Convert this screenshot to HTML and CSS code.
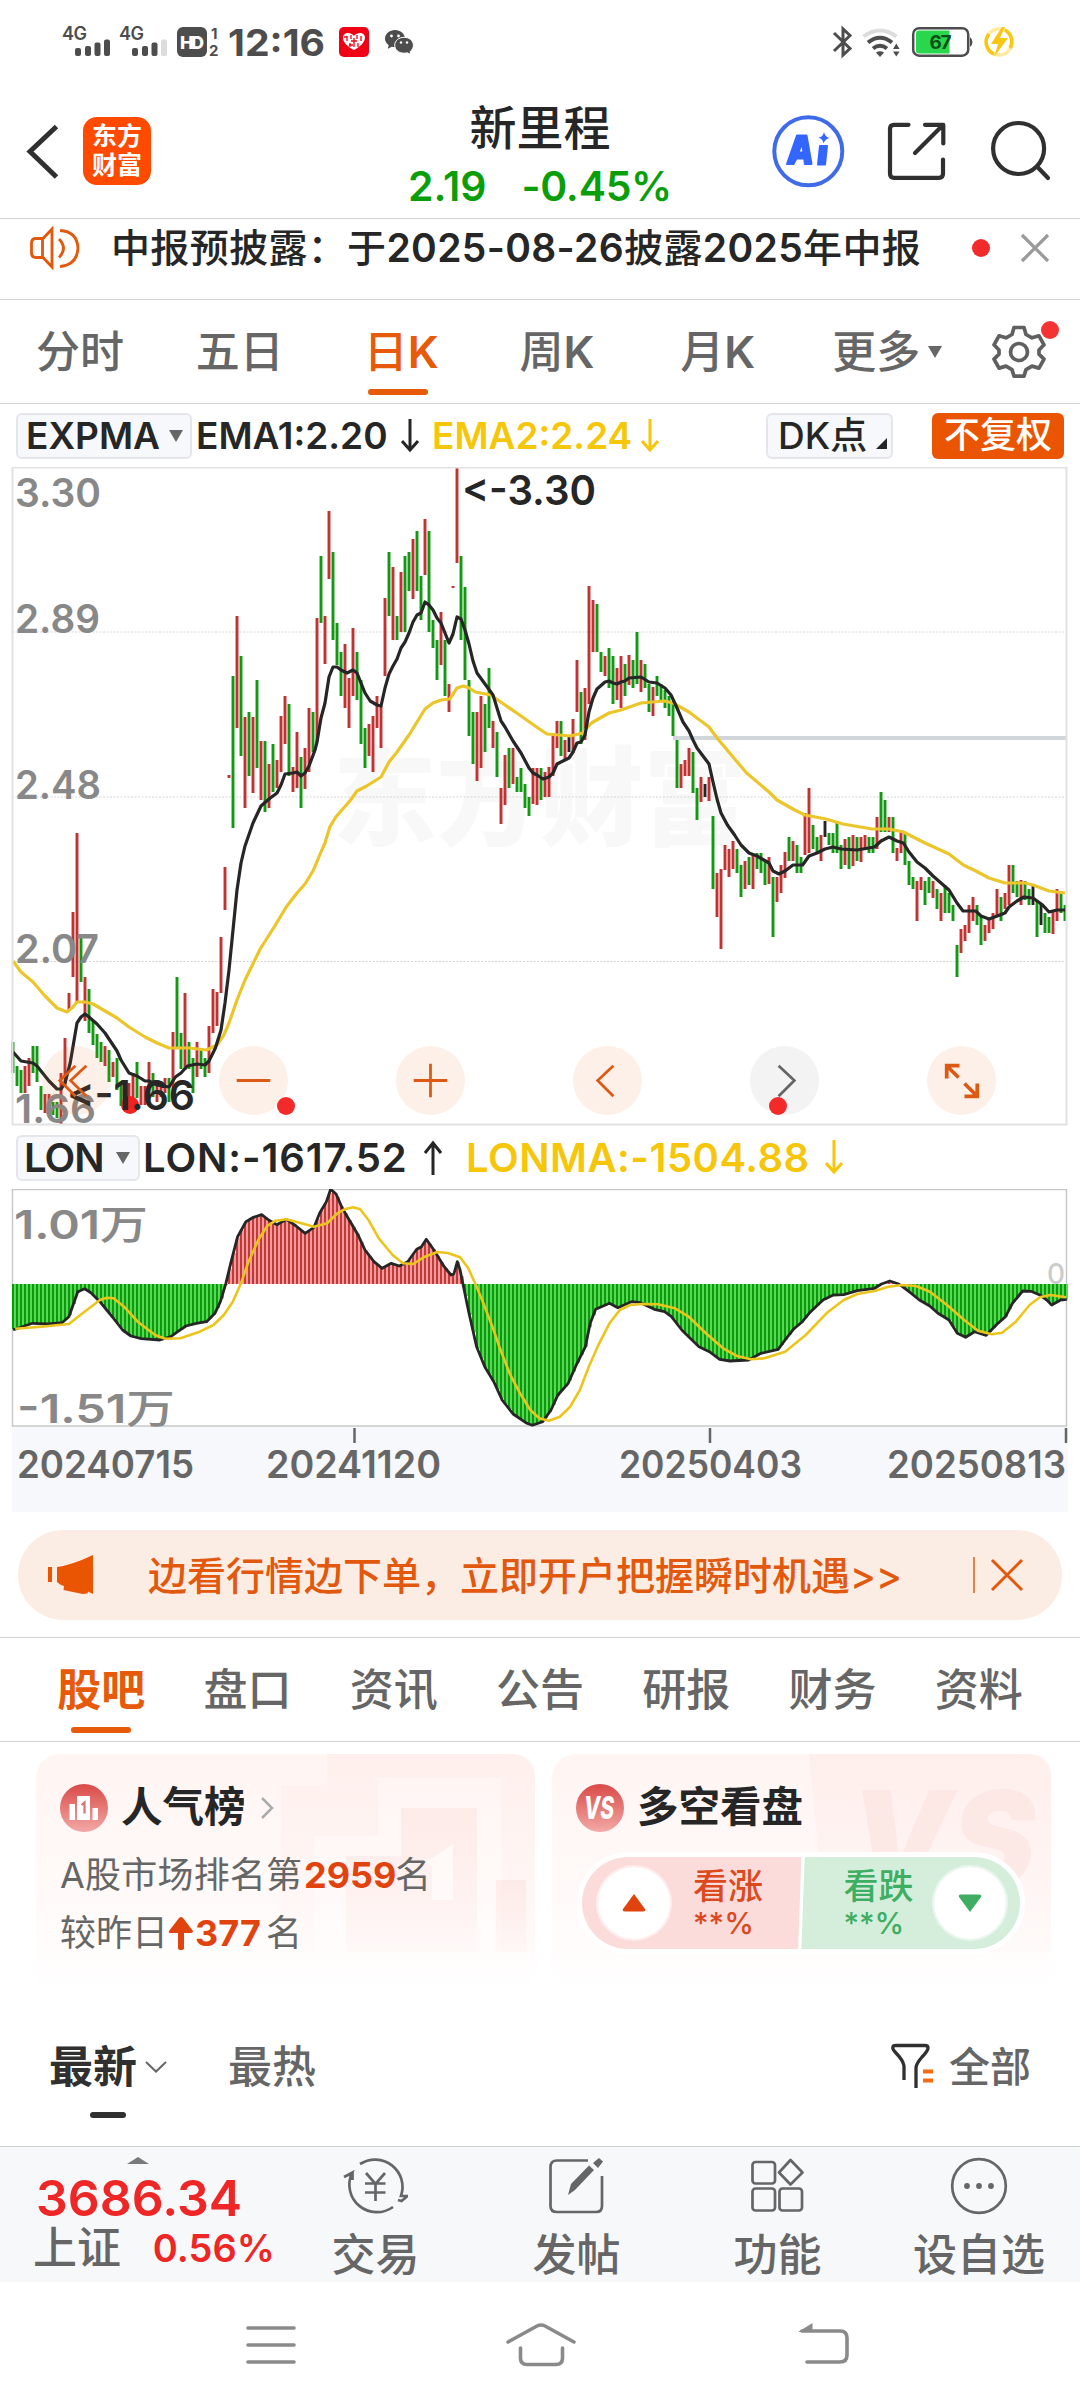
FILE: index.html
```html
<!DOCTYPE html>
<html lang="zh-CN">
<head>
<meta charset="utf-8">
<title>新里程</title>
<link rel="stylesheet" href="styles.css">
</head>
<body>
<div class="status">
  <svg class="status-left" viewBox="60 20 360 44" width="360" height="44">
    <g fill="#4d4d4d">
      <text x="62" y="39.500" class="st-4g" textLength="25">4G</text>
      <text x="119" y="39.500" class="st-4g" textLength="25">4G</text>
      <rect x="75" y="48" width="6" height="8" rx="2"/><rect x="85" y="46" width="6" height="10" rx="2"/><rect x="94.500" y="42.500" width="6" height="13.500" rx="2"/><rect x="104" y="39.500" width="6" height="16.500" rx="2"/>
      <rect x="132" y="48" width="6" height="8" rx="2"/><rect x="142" y="46" width="6" height="10" rx="2"/><rect x="151.500" y="42.500" width="6" height="13.500" rx="2"/>
      <rect x="161" y="39.500" width="6" height="16.500" rx="2" fill="#dcdcdc"/>
      <rect x="177" y="27" width="30" height="30" rx="6"/>
      <text x="180" y="49" class="st-hd" textLength="24">HD</text>
      <text x="211" y="39" class="st-sim">1</text>
      <text x="209" y="56" class="st-sim">2</text>
      <text x="228" y="56" class="st-time" textLength="97" lengthAdjust="spacingAndGlyphs">12:16</text>
    </g>
    <rect x="339" y="27" width="30" height="30" rx="5" fill="#f00014"/>
    <path d="M354 50 C340 43 341 33 348 33 C352 33 354 36 354 36 C354 36 356 33 360 33 C367 33 368 43 354 50Z" fill="#fff"/>
    <path d="M344 37h3v4M347 36v5m4-6v4m6-4v4m4-3v5M354 38v9m-4-4v4m8-4v4M351 41h6M349 45h4" stroke="#f00014" stroke-width="1.300" fill="none"/>
    <g fill="#4d4d4d">
      <path d="M395 30c-5.500 0-10 3.800-10 8.600 0 2.700 1.400 5 3.700 6.600l-.9 3.600 4-2c1 .3 2 .4 3.200.4 5.500 0 10-3.800 10-8.600S400.500 30 395 30z"/>
      <path d="M404 37.300c-5.300 0-9.300 3.500-9.300 7.900s4 8 9.300 8c1.200 0 2.200-.1 3.200-.4l3.700 1.800-.8-3c2-1.500 3.300-3.800 3.300-6.400 0-4.400-4.100-7.900-9.400-7.900z" stroke="#fff" stroke-width="1"/>
    </g>
    <g fill="#fff"><circle cx="391.500" cy="36" r="1.400"/><circle cx="398.500" cy="36" r="1.400"/><circle cx="401" cy="42.500" r="1.200"/><circle cx="407" cy="42.500" r="1.200"/></g>
  </svg>
  <svg class="status-right" viewBox="830 20 190 44" width="190" height="44">
    <path d="M834 33L850 48.500L843 55V29L850 35.500L834 51" fill="none" stroke="#4d4d4d" stroke-width="3"/>
    <g fill="none">
      <path d="M863.500 36.500Q880 24.500 896.500 36.500" stroke="#dcdcdc" stroke-width="4"/>
      <path d="M868 42.500Q880 33 892 42.500" stroke="#4d4d4d" stroke-width="4"/>
      <path d="M873 48.500Q880 43 887 48.500" stroke="#4d4d4d" stroke-width="4"/>
    </g>
    <path d="M876 52.500Q880 50 884 52.500L880 57Z" fill="#4d4d4d"/>
    <path d="M893 49l3.300-5.500 3.300 5.500zM893 51.500l3.300 5 3.300-5z" fill="#4d4d4d"/>
    <rect x="913.200" y="28.200" width="55" height="27.500" rx="6" fill="#fff" stroke="#4d4d4d" stroke-width="2.500"/>
    <path d="M919 30.500h30.500v23H919q-3 0-3-3v-17q0-3 3-3z" fill="#28d74b"/>
    <path d="M970 37q2.500 2 2.500 5t-2.500 5z" fill="#4d4d4d"/>
    <text x="929.500" y="48.500" class="st-bat" textLength="22">67</text>
    <circle cx="999" cy="42" r="13" fill="none" stroke="#ffeaa0" stroke-width="3.500"/>
    <path d="M1005 30a13 13 0 0 1 5 18M994 54a13 13 0 0 1-5-20" fill="none" stroke="#f9c613" stroke-width="3.500"/>
    <path d="M1002 27L991 44h7l-4 13 14-19h-8l5-11z" fill="#f9c613"/>
  </svg>
</div>

<header class="top">
  <div class="top-left">
    <svg viewBox="26 120 34 62" width="34" height="62"><path d="M56.500 126.500L30 151.500L56.500 177" fill="none" stroke="#303030" stroke-width="5"/></svg>
    <div class="logo"><span>东方</span><span>财富</span></div>
  </div>
  <div class="top-mid">
    <h1>新里程</h1>
    <div class="quote"><span class="q1">2.19</span><span class="q2">-0.45%</span></div>
  </div>
  <svg class="top-right" viewBox="770 113 284 76" width="284" height="76">
    <circle cx="808.300" cy="151.300" r="34" fill="#fff" stroke="#3f6bea" stroke-width="4"/>
    <g fill="#3366ff" stroke="#3366ff" stroke-width="2" stroke-linejoin="round">
      <path fill-rule="evenodd" d="M797 135.500h9.500l5 28.500h-6.500l-.8-5.500h-7.700l-3 5.500h-6.500zM802 143l-3.500 9.500h5z"/>
      <path d="M820 146h7l-2 18.500h-7z"/>
    </g>
    <path d="M824 132Q825 137 829.500 138Q825 139 823.500 143.500Q823 139 818.500 137.500Q823 137 824 132Z" fill="#3366ff"/>
    <g fill="none" stroke="#303030" stroke-width="4.200" stroke-linecap="round" stroke-linejoin="round">
      <path d="M908.500 124.800H894q-4 0-4 4v45q0 4 4 4H939q4 0 4-4V159.500M925 124.800h18.300V143.500M941 127L915 153"/>
      <circle cx="1018.600" cy="148.500" r="25.500"/>
      <path d="M1037 166.500l11 11.500"/>
    </g>
  </svg>
</header>

<div class="notice">
  <svg viewBox="28 222 56 48" width="56" height="48"><g fill="none" stroke="#e2580c" stroke-width="2.800"><path d="M36 236.500h7l9-9.500v38l-9-9.500h-7q-4.500 0-4.500-4.500V241q0-4.500 4.500-4.500zM42.500 237v18M59 237q9 9.500 0 18.500M60 228.500Q77 229.500 78 246Q77 263 60 264.500"/></g></svg>
  <span class="notice-text">中报预披露：于<span class="n">2025-08-26</span>披露<span class="n">2025</span>年中报</span>
  <i class="dot"></i>
  <svg class="notice-x" viewBox="0 0 30 30" width="30" height="30"><path d="M2 2L28 28M28 2L2 28" stroke="#9a9a9a" stroke-width="3.200"/></svg>
</div>

<nav class="periods">
  <span>分时</span><span>五日</span><span class="on">日<span class="n">K</span></span><span>周<span class="n">K</span></span><span>月<span class="n">K</span></span>
  <span class="more">更多<svg viewBox="0 0 14 12" width="14" height="12"><path d="M0 0h14L7 12z" fill="#666"/></svg></span>
  <div class="gear">
    <svg viewBox="992 324 54 56" width="54" height="56"><g fill="none" stroke="#606060" stroke-width="3.700" stroke-linejoin="round"><path d="M1014 327.500h10l2 7 6 3.300 7-2 5 9-5 5.300v4l5 5-5 9-7-2-6 3.500-2 6.500h-10l-2-6.500-6-3.500-7 2-5-9 5-5v-4l-5-5.300 5-9 7 2 6-3.300z"/><circle cx="1019" cy="352" r="8.500"/></g></svg>
    <i class="dot"></i>
  </div>
</nav>

<div class="ind">
  <span class="box expma"><span class="t">EXPMA</span><svg viewBox="0 0 14 12" width="14" height="12"><path d="M0 0h14L7 12z" fill="#666"/></svg></span>
  <span class="ema1">EMA1:2.20</span>
  <svg class="arr1" viewBox="0 0 18 34" width="18" height="34"><path d="M9 0V31M1 22L9 31L17 22" fill="none" stroke="#262626" stroke-width="3"/></svg>
  <span class="ema2">EMA2:2.24</span>
  <svg class="arr2" viewBox="0 0 18 34" width="18" height="34"><path d="M9 0V31M1 22L9 31L17 22" fill="none" stroke="#f6c60b" stroke-width="3"/></svg>
  <span class="box dk">DK点<svg viewBox="0 0 11 11" width="11" height="11"><path d="M11 0V11H0z" fill="#262626"/></svg></span>
  <span class="fq">不复权</span>
</div>

<section class="kchart">
  <svg id="kline" viewBox="0 467 1080 659" width="1080" height="659">
    <text x="333" y="837" class="wm" textLength="414" lengthAdjust="spacingAndGlyphs">东方财富</text>
    <path d="M12 632H1067M12 797H1067M12 961.500H1067" stroke="#d6d6d6" stroke-width="1" stroke-dasharray="2 1.500"/>
    <path d="M673 738H1067" stroke="#d1d6da" stroke-width="4"/>
    <g id="candles" fill="none" stroke-width="2.900"></g>
    <circle cx="130" cy="1105" r="9" fill="#f22222"/>
    <g fill="none" stroke-width="3.200" stroke-linejoin="round">
      <polyline id="ema2" stroke="#ecc52a"/>
      <polyline id="ema1" stroke="#262626"/>
    </g>
    <rect x="12.500" y="467.500" width="1054" height="657" fill="none" stroke="#e2e2e2" stroke-width="2"/>
    <g class="axis">
      <text x="15" y="507" textLength="86" lengthAdjust="spacingAndGlyphs">3.30</text>
      <text x="15" y="633" textLength="85" lengthAdjust="spacingAndGlyphs">2.89</text>
      <text x="15" y="799" textLength="86" lengthAdjust="spacingAndGlyphs">2.48</text>
      <text x="15" y="963" textLength="84" lengthAdjust="spacingAndGlyphs">2.07</text>
      <text x="15" y="1123" textLength="81" lengthAdjust="spacingAndGlyphs">1.66</text>
    </g>
    <g class="mark">
      <text x="462" y="505" textLength="134" lengthAdjust="spacingAndGlyphs">&lt;-3.30</text>
      <text x="67" y="1110" textLength="128" lengthAdjust="spacingAndGlyphs">&lt;-1.66</text>
    </g>
  </svg>
  <div class="controls">
    <b><svg viewBox="0 0 70 70"><path d="M34 20L18 35L34 51M45 20L29 35L45 51"/></svg></b>
    <b><svg viewBox="0 0 70 70"><path d="M18 35H52"/></svg><i class="dot d2"></i></b>
    <b><svg viewBox="0 0 70 70"><path d="M18 35H52M35 18V52"/></svg></b>
    <b><svg viewBox="0 0 70 70"><path d="M41 20L25 35L41 51"/></svg></b>
    <b class="off"><svg viewBox="0 0 70 70"><path d="M29 20L45 35L29 51"/></svg><i class="dot d5"></i></b>
    <b><svg viewBox="0 0 70 70"><path class="heavy" d="M33 20H20V33M20 20L32 32M38 51H51V38M51 51L38 38"/></svg></b>
  </div>
</section>

<div class="ind lon">
  <span class="box lonbox"><span class="t">LON</span><svg viewBox="0 0 14 12" width="14" height="12"><path d="M0 0h14L7 12z" fill="#666"/></svg></span>
  <span class="lon1">LON:-1617.52</span>
  <svg class="arr3" viewBox="0 0 18 35" width="18" height="35"><path d="M9 35V3M1 13L9 3L17 13" fill="none" stroke="#262626" stroke-width="3"/></svg>
  <span class="lon2">LONMA:-1504.88</span>
  <svg class="arr4" viewBox="0 0 18 35" width="18" height="35"><path d="M9 0V32M1 23L9 32L17 23" fill="none" stroke="#f6c60b" stroke-width="3"/></svg>
</div>

<section class="lchart">
  <svg viewBox="0 1189 1080 323" width="1080" height="323">
    <rect x="12" y="1427" width="1056" height="85" fill="#f7f8fb"/>
    <rect x="12.500" y="1189.500" width="1054" height="236.500" fill="#fff" stroke="#c8c8c8" stroke-width="1.500"/>
    <text x="1047" y="1284" class="zero">0</text>
    <g id="hist"></g>
    <polyline id="lon" fill="none" stroke="#262626" stroke-width="2.800" stroke-linejoin="round"/>
    <polyline id="lonma" fill="none" stroke="#ecc51c" stroke-width="2.600" stroke-linejoin="round"/>
    <g class="axis">
      <text x="14" y="1239" textLength="134" lengthAdjust="spacingAndGlyphs"><tspan class="n">1.01</tspan><tspan class="wan">万</tspan></text>
      <text x="17" y="1423" textLength="158" lengthAdjust="spacingAndGlyphs"><tspan class="n">-1.51</tspan><tspan class="wan">万</tspan></text>
    </g>
    <path d="M354.500 1428V1443M710 1428V1443M1066 1428V1443" stroke="#666" stroke-width="2.500"/>
    <g class="dates">
      <text x="17" y="1478" textLength="177" lengthAdjust="spacingAndGlyphs">20240715</text>
      <text x="266" y="1478" textLength="175" lengthAdjust="spacingAndGlyphs">20241120</text>
      <text x="619" y="1478" textLength="183" lengthAdjust="spacingAndGlyphs">20250403</text>
      <text x="887" y="1478" textLength="179" lengthAdjust="spacingAndGlyphs">20250813</text>
    </g>
  </svg>
</section>

<div class="banner">
  <svg viewBox="46 1553 50 44" width="50" height="44"><path d="M48 1567h4v15h-4zM57 1567q15-2 36-12v39q-2-1-5-2.500l-.5 2-5 .5-19-4 .5-4q-4-1-7-4z" fill="#ea5504"/></svg>
  <span class="banner-text">边看行情边下单，立即开户把握瞬时机遇&gt;&gt;</span>
  <span class="sep"></span>
  <svg class="bx" viewBox="0 0 34 34" width="34" height="34"><path d="M2 2L32 32M32 2L2 32" stroke="#e2580c" stroke-width="3"/></svg>
</div>

<nav class="tabs"><span class="on">股吧</span><span>盘口</span><span>资讯</span><span>公告</span><span>研报</span><span>财务</span><span>资料</span></nav>

<section class="cards">
  <article class="card">
    <svg class="deco" viewBox="0 0 499 242" width="499" height="242">
      <defs><linearGradient id="fade" x1="0" y1="0" x2="0" y2="1"><stop offset="0" stop-color="#fbdcd8" stop-opacity=".45"/><stop offset="1" stop-color="#fbdcd8" stop-opacity=".12"/></linearGradient></defs>
      <path fill="url(#fade)" d="M245 32H291V0H477Q499 0 499 22V198H465V24H342V82H278V198H245z" opacity=".5"/>
      <path fill="url(#fade)" fill-rule="evenodd" d="M365 54H441V198H310V102H365zM390 108L417 90V146H396V112z"/>
      <path fill="url(#fade)" d="M460 126H490V198H460z"/>
    </svg>
    <div class="card-head">
      <svg viewBox="0 0 48 48" width="48" height="48"><defs><linearGradient id="rg" x1="0" y1="0" x2="0" y2="1"><stop offset="0" stop-color="#d94a48"/><stop offset="1" stop-color="#f2a9a6"/></linearGradient></defs><circle cx="24" cy="24" r="24" fill="url(#rg)"/><path d="M9.500 20h5.500v16H9.500zM17 12H30V36H17zM32.500 24H38V36h-5.500z" fill="#fff"/><path d="M21.500 21l3-2.500v11" fill="none" stroke="#dd6f6c" stroke-width="2.200"/></svg>
      <h2>人气榜</h2>
      <svg class="chev" viewBox="0 0 14 24" width="14" height="24"><path d="M2 2L12 12L2 22" fill="none" stroke="#aaa" stroke-width="2.500"/></svg>
    </div>
    <p class="row1"><span class="pre">A股市场排名第</span><em>2959</em>名</p>
    <p class="row2">较昨日<svg viewBox="0 0 26 33" width="26" height="33"><path d="M13 0Q14 0 15 1L25 14Q25 16 23 16H16V31Q16 33 13 33T10 31V16H3Q0 16 1 14L11 1Q12 0 13 0z" fill="#e1430f"/></svg><em>377</em><span class="ming">名</span></p>
  </article>
  <article class="card">
    <svg class="deco" viewBox="0 0 499 242" width="499" height="242"><path fill="url(#fade)" opacity=".6" d="M257 0H477Q499 0 499 22V198H275z"/><text x="298" y="132" class="vsbig" textLength="185" lengthAdjust="spacingAndGlyphs">VS</text></svg>
    <div class="card-head">
      <svg viewBox="0 0 48 48" width="48" height="48"><circle cx="24" cy="24" r="24" fill="url(#rg)"/><text x="8" y="35" class="vs" textLength="30" lengthAdjust="spacingAndGlyphs">VS</text></svg>
      <h2>多空看盘</h2>
    </div>
    <div class="pill">
      <div class="half up"><span class="knob"><svg viewBox="0 0 24 18" width="24" height="18"><path d="M12 0L23 15Q24 17.500 21 17.500H3Q0 17.500 1 15z" fill="#e1430f"/></svg></span><span class="vote"><b>看涨</b><b class="pc">**%</b></span></div>
      <div class="half down"><span class="vote"><b>看跌</b><b class="pc">**%</b></span><span class="knob"><svg viewBox="0 0 24 18" width="24" height="18"><path d="M12 18L23 3Q24 .5 21 .5H3Q0 .5 1 3z" fill="#3fae62"/></svg></span></div>
    </div>
  </article>
</section>

<div class="sort">
  <span class="newest">最新</span>
  <svg class="down-chev" viewBox="0 0 22 12" width="22" height="12"><path d="M1 1L11 10.500L21 1" fill="none" stroke="#666" stroke-width="2"/></svg>
  <span class="hot">最热</span>
  <svg class="filter" viewBox="890 2042 46 50" width="46" height="50"><path d="M904 2080V2066Q903 2060 896 2053Q892 2049 893 2047Q893 2045.500 896 2045.500H925Q928 2045.500 928 2048Q928 2051 922 2057Q916 2064 916 2068V2088" fill="none" stroke="#303030" stroke-width="3.300"/><path d="M923 2071.500h10M923 2080.500h10" stroke="#f56a12" stroke-width="4"/></svg>
  <span class="all">全部</span>
</div>

<footer class="bar">
  <div class="index">
    <svg viewBox="0 0 22 7" width="22" height="7"><path d="M0 7L11 0L22 7z" fill="#7a7a7a"/></svg>
    <div class="index-val">3686.34</div>
    <div class="index-row"><span class="nm">上证</span><span class="pct">0.56%</span></div>
  </div>
  <div class="act"><svg viewBox="342 2156 68 60" width="68" height="60"><g fill="none" stroke="#666" stroke-width="2.700"><path d="M360 2164A27.500 27.500 0 0 1 401 2196L408 2196M398 2200L401.500 2201L407 2196.500M393 2207A27.500 27.500 0 0 1 352 2173L344 2177M344 2177L352.500 2172.500V2180"/><path d="M366 2173l9.500 11 9.500-11M375.500 2184V2201M365 2183.500h20.500M365 2192.500h20.500"/></g></svg><span>交易</span></div>
  <div class="act"><svg viewBox="548 2156 60 60" width="60" height="60"><g fill="none" stroke="#666" stroke-width="2.700"><path d="M589 2160.500H558Q551.500 2160.500 551.500 2167V2206Q551.500 2212 558 2212H597Q603 2212 603 2206V2176"/></g><path d="M569 2195L572 2184L590 2165.500L595 2170L576 2190zM594 2163L600 2158L604 2161.500L599 2168z" fill="#666"/></svg><span>发帖</span></div>
  <div class="act"><svg viewBox="749 2156 60 60" width="60" height="60"><g fill="none" stroke="#666" stroke-width="2.700"><rect x="753.500" y="2162" width="22.500" height="21.500" rx="3"/><rect x="753.500" y="2188.500" width="22.500" height="22" rx="3"/><rect x="780.500" y="2188.500" width="22.500" height="22" rx="3"/><path d="M791.500 2160L803.500 2172.500L791.500 2184.500L780 2172.500Z" stroke-linejoin="round"/></g></svg><span>功能</span></div>
  <div class="act"><svg viewBox="949 2156 60 60" width="60" height="60"><circle cx="979" cy="2186" r="26.800" fill="none" stroke="#666" stroke-width="2.700"/><g fill="#666"><circle cx="967" cy="2186" r="2.900"/><circle cx="979" cy="2186" r="2.900"/><circle cx="991" cy="2186" r="2.900"/></g></svg><span>设自选</span></div>
</footer>

<nav class="sys">
  <svg viewBox="244 2320 54 50" width="54" height="50"><path d="M248 2328H294M248 2345H294M248 2362H294" stroke="#8a8a8a" stroke-width="3.600" stroke-linecap="round"/></svg>
  <svg class="home" viewBox="504 2320 74 50" width="74" height="50"><path d="M508 2342L537 2326Q541 2324 545 2326L574 2342M520.500 2348V2358Q520.500 2364.500 527 2364.500H556Q562.500 2364.500 562.500 2358V2348" fill="none" stroke="#8a8a8a" stroke-width="3.600" stroke-linecap="round" stroke-linejoin="round"/></svg>
  <svg viewBox="796 2320 56 50" width="56" height="50"><path d="M802 2331H840Q847 2331 847 2338V2355Q847 2362 840 2362H807" fill="none" stroke="#8a8a8a" stroke-width="3.600" stroke-linecap="round"/><path d="M798 2332L812.500 2323V2332z" fill="#8a8a8a"/></svg>
</nav>
<script src="charts.js"></script>
</body>
</html>
```
FILE: styles.css
```css
* { box-sizing: border-box; margin: 0; padding: 0; }
body {
  width: 1080px; height: 2408px; overflow: hidden; background: #fff; color: #262626;
  font-family: Inter, "Noto Sans CJK SC", sans-serif; font-weight: 500; line-height: 1; white-space: nowrap;
}
svg { display: block; flex: none; }
i, em { font-style: normal; }
.n { font-weight: 600; }
.dot { display: block; width: 18px; height: 18px; border-radius: 50%; background: #f22a2a; }

.status { height: 84px; padding: 20px 60px 0; display: flex; justify-content: space-between; }
.st-4g { font-size: 18px; font-weight: 600; }
.st-hd { font-size: 18px; font-weight: 800; fill: #fff; }
.st-sim { font-size: 15px; font-weight: 700; }
.st-time { font-size: 37px; font-weight: 700; }
.st-bat { font-size: 19px; font-weight: 700; fill: #0c4d18; }

.top { height: 135px; padding: 0 26px; display: grid; grid-template-columns: 284px 1fr 284px; border-bottom: 1px solid #d2d2d2; }
.top-left { display: flex; align-items: center; gap: 23px; }
.logo { width: 68px; height: 68px; border-radius: 14px; background: #ff4a00; color: #fff; display: flex; flex-direction: column; align-items: center; justify-content: center; gap: 4px; font-size: 25px; font-weight: 700; }
.logo span { height: 25px; line-height: 25px; }
.top-mid { display: flex; flex-direction: column; align-items: center; }
.top-mid h1 { font-size: 47px; font-weight: 500; line-height: 47px; margin-top: 20px; }
.quote { display: flex; width: 264px; margin-top: 15px; color: #0a9e0a; font-size: 41px; font-weight: 600; }
.q1 { width: 115px; }
.q2 { letter-spacing: -.3px; }
.top-right { align-self: start; margin-top: 29px; }

.notice { height: 81px; padding: 0 30px 23px 28px; display: flex; align-items: center; border-bottom: 1px solid #d2d2d2; }
.notice-text { width: 833px; margin-left: 27px; font-size: 39px; letter-spacing: .35px; }
.notice .dot { margin-left: 28px; }
.notice-x { margin-left: 30px; }

.periods { height: 104px; padding: 0 34px 0 36px; display: flex; align-items: center; color: #666; font-size: 44px; border-bottom: 1px solid #d2d2d2; }
.periods > span { position: relative; width: 160px; line-height: 106px; }
.periods > span:nth-child(2) { width: 168px; }
.periods > span:nth-child(3) { width: 156px; }
.periods > span:nth-child(4) { width: 161px; }
.periods > span:nth-child(5) { width: 152px; }
.periods .on { color: #e65a0a; }
.on::after { content: ""; position: absolute; left: 4px; bottom: 7px; width: 60px; height: 6px; border-radius: 3px; background: #e65a0a; }
.periods .on::after { bottom: 10px; }
.periods .more { display: flex; align-items: center; gap: 8px; }
.gear { position: relative; margin-left: auto; }
.gear .dot { position: absolute; left: 49px; top: -3px; background: #f53333; }

.ind { height: 63px; padding-left: 16px; display: flex; align-items: center; font-size: 37px; font-weight: 600; }
.box { height: 46px; border: 2px solid #e4e6ec; border-radius: 6px; background: #f7f8fb; display: flex; align-items: center; }
.expma { width: 176px; padding-left: 8px; }
.expma .t { width: 143px; }
.ema1 { width: 198px; margin-left: 4px; }
.ema2 { width: 204px; margin-left: 13px; color: #f6c60b; }
.arr1 { margin-left: 7px; }
.arr2 { margin-left: 5px; }
.dk { width: 127px; margin-left: 107px; padding-left: 10px; font-weight: 500; }
.dk svg { margin: 16px 0 0 9px; }
.fq { width: 132px; height: 46px; line-height: 45px; margin-left: 39px; border-radius: 6px; background: #ea5504; color: #fff; text-align: center; font-size: 36px; font-weight: 500; }

.kchart { position: relative; height: 659px; }
.wm { font-size: 108px; font-weight: 900; fill: #f8f8f8; }
.axis { font-size: 40px; font-weight: 600; fill: #888; }
.axis .wan { font-weight: 500; }
.mark { font-size: 41px; font-weight: 600; fill: #262626; }
.controls { position: absolute; left: 42px; bottom: 11px; display: flex; gap: 108px; }
.controls b { position: relative; width: 69px; height: 69px; border-radius: 50%; background: rgba(240, 110, 40, .1); }
.controls b.off { background: rgba(100, 100, 100, .08); }
.controls path { fill: none; stroke: #dd5a14; stroke-width: 2.8; }
.controls .heavy { stroke-width: 3.8; }
.controls .off path { stroke: #666; }
.controls .dot { position: absolute; top: 51px; }
.controls .d2 { left: 58px; }
.controls .d5 { left: 19px; }

.lon { font-size: 40px; }
.lonbox { width: 124px; padding-left: 6px; }
.lonbox .t { width: 92px; letter-spacing: -1px; }
.lon1 { width: 276px; margin-left: 3px; letter-spacing: .9px; }
.lon2 { width: 352px; margin-left: 24px; color: #f6c60b; letter-spacing: .5px; }
.arr3 { margin-left: 5px; }
.arr4 { margin-left: 7px; }

.lchart { height: 323px; }
.zero { font-size: 28px; fill: #ccc; }
.dates { font-size: 38px; font-weight: 600; fill: #666; }

.banner { height: 90px; margin: 18px 18px 17px; padding-left: 28px; border-radius: 45px; background: #fcede4; color: #e2580c; display: flex; align-items: center; }
.banner-text { width: 792px; margin-left: 52px; font-size: 39px; }
.sep { width: 2px; height: 36px; margin-left: 33px; background: #e2824e; }
.bx { margin-left: 15px; }

.tabs { height: 105px; border-top: 1px solid #d2d2d2; border-bottom: 1px solid #d2d2d2; padding: 0 28px; display: flex; color: #666; font-size: 44px; }
.tabs span { position: relative; width: 146.3px; text-align: center; line-height: 105px; }
.tabs .on { color: #e65a0a; font-weight: 600; }
.tabs .on::after { left: 43px; bottom: 8px; }

.cards { height: 254px; padding: 12px 29px 0 36px; display: flex; gap: 17px; }
.card { position: relative; width: 499px; height: 242px; padding: 30px 0 0 24px; border-radius: 24px; background: linear-gradient(#fff5f3, #fffaf9 60%, #fff); }
.deco { position: absolute; left: 0; top: 0; }
.card-head { position: relative; display: flex; align-items: center; height: 48px; }
.card-head h2 { margin-left: 13px; font-size: 41.5px; font-weight: 700; }
.chev { margin-left: 14px; }
.vs { font-size: 31px; font-weight: 800; font-style: italic; fill: #fff; }
.vsbig { font-size: 132px; font-weight: 900; font-style: italic; fill: #fbe0dc; opacity: .5; }
.card p { position: relative; color: #666; font-size: 36px; font-weight: 400; display: flex; align-items: center; height: 36px; }
.row1 { margin-top: 25px; }
.row2 { margin-top: 22px; }
.pre { width: 244px; letter-spacing: .2px; }
.card em { color: #e1430f; font-weight: 700; font-size: 36px; }
.row1 em { width: 91px; }
.row2 em { width: 67px; margin-left: 1px; }
.ming { margin-left: 4px; }

.pill { position: relative; width: 448px; height: 102px; margin: 20px 0 0 1px; padding: 5px; border-radius: 51px; background: #fff; display: flex; }
.half { height: 92px; display: flex; align-items: center; }
.up { width: 221px; padding-left: 14px; border-radius: 46px 0 0 46px; background: #fcdcda; color: #da4a1e; clip-path: polygon(0 0, 100% 0, 98.500% 100%, 0 100%); }
.down { width: 220px; padding-left: 42px; border-radius: 0 46px 46px 0; background: #d5eedc; color: #3fae62; clip-path: polygon(1.500% 0, 100% 0, 100% 100%, 0 100%); }
.knob { width: 76px; height: 76px; border: 2px solid rgba(255,255,255,.5); background: #fff; background-clip: padding-box; border-radius: 50%; display: flex; align-items: center; justify-content: center; flex: none; }
.vote { width: 89px; display: flex; flex-direction: column; gap: 4px; }
.up .vote { margin-left: 21px; }
.vote b { font-size: 35px; font-weight: 500; }
.vote .pc { font-size: 30px; line-height: 30px; }

.sort { height: 150px; padding: 0 49px 8px; display: flex; align-items: center; font-size: 44px; font-weight: 500; color: #666; }
.newest { position: relative; color: #303030; font-weight: 700; }
.newest::after { content: ""; position: absolute; left: 41px; top: 67px; width: 36px; height: 6px; border-radius: 3px; background: #303030; }
.down-chev { margin-left: 8px; }
.hot { margin-left: 61px; }
.filter { margin-left: auto; }
.all { margin-left: 13px; font-size: 41px; }

.bar { height: 136px; border-top: 1px solid #cdd2d6; background: #f7f8fa; display: grid; grid-template-columns: 275px 201px 201px 201px 202px; color: #666; }
.index { padding-left: 33px; }
.index svg { margin: 10px 0 0 94px; }
.index-val { margin: 9px 0 0 3px; font-size: 50px; line-height: 51px; font-weight: 600; color: #ee2626; }
.index-row { margin-top: 2px; display: flex; align-items: center; font-size: 44px; }
.nm { width: 122px; }
.pct { font-size: 38px; font-weight: 600; color: #ee2626; }
.act { padding-top: 9px; display: flex; flex-direction: column; align-items: center; font-size: 44px; }
.act span { margin-top: 17px; }

.sys { height: 126px; padding: 38px 228px 0 244px; display: flex; justify-content: space-between; }
.home { margin-right: 12px; }
```
FILE: charts.js
```js
const X0 = 13, STEP = 4;
const bx = i => X0 + STEP * i;

// One entry per trading day: colour, high and low in chart pixels.
const days = `g1042-1073 g1066-1086 g1070-1093 r1066-1093 r1058-1086 g1046-1073 g1046-1082 g1086-1110 r1094-1113 r1094-1106 g1102-1115 g1102-1118 r1073-1125 r1038-1087 r993-1010 r912-977 r833-1002 g937-982 r977-1021 g989-1033
g1020-1045 g1034-1058 g1042-1062 r1046-1066 g1050-1082 r1062-1077 g1058-1090 g1082-1106 g1087-1105 r1083-1110 r1073-1100 g1062-1098 r1086-1105 r1086-1105 r1062-1093 g1073-1097 r1082-1102 r1082-1097 r1078-1093 g1078-1102
r1032-1098 g977-1047 g1033-1069 r993-1070 g1042-1069 g1058-1093 r1042-1077 g1050-1069 g1058-1077 r1026-1073 r989-1033 r992-1026 r937-993 r867-910 r775-778 g676-828 r616-728 g656-756 r717-808 g712-776
r717-793 g680-768 r741-800 g741-812 r764-808 g744-792 r760-788 r716-772 r696-744 g704-776 r767-792 r732-788 g757-808 r748-789 r708-772 g712-752 r618-742 g556-623 r616-664 r511-579
g552-640 g623-665 g652-696 r644-708 r678-728 r628-696 g652-700 g680-744 g728-768 r724-756 r716-772 r696-728 r706-748 r598-676 g552-616 r567-640 g616-640 r572-632 g556-632 g552-591
r539-599 g531-591 g576-620 r519-575 g531-632 g620-648 g640-680 r612-665 g640-696 r684-712 r586-588 r467-563 g556-640 g587-680 g680-736 g712-764 r712-781 r696-768 g704-752 g668-728
r721-748 g732-777 r788-824 r755-805 g748-788 r748-784 g777-792 g768-792 g784-808 g797-816 r768-804 r768-805 g768-800 r772-797 r767-797 r736-776 r721-748 g721-756 r740-760 k737-752
r719-753 r660-712 g692-744 r688-740 r586-704 r600-652 g604-652 g652-672 r656-676 g648-688 g656-704 r668-700 r656-708 g664-696 r655-685 g660-688 g632-684 r660-692 g664-688 g684-712
r687-716 g676-696 g684-700 g690-708 g696-716 g704-736 g740-788 r764-788 r760-776 r748-776 g752-793 g788-820 r777-802 k784-797 r777-801 g816-889 r873-917 r869-949 r845-870 r849-877
r841-869 g849-873 g865-897 r861-889 g857-885 r855-889 g853-869 g853-873 g860-885 r857-884 g877-937 r877-902 r865-893 r852-878 g837-861 r841-861 g845-873 g857-873 r813-855 r788-853
g825-849 g837-853 r835-861 k821-837 g833-845 g833-853 g822-853 g845-869 r839-865 g837-869 r835-866 g837-861 r837-862 r835-850 g837-853 g837-853 r817-849 g792-832 g800-832 r817-832
g817-853 r848-861 r832-853 g832-865 g861-885 g877-889 r881-921 r877-890 g881-905 g877-893 r881-898 g889-909 r893-921 g885-913 g893-913 g905-921 g945-977 r929-953 r925-941 r905-933
r897-921 g905-925 g917-945 r925-941 r918-933 r913-929 r889-917 g897-921 r893-909 r865-905 g865-893 g881-897 r880-905 g881-900 g889-905 k886-905 g901-937 k904-925 g913-933 g917-933
r912-934 r889-921 g893-913 g905-921`.split(/\s+/);

const colours = { r: '#c13232', g: '#139813', k: '#262626' };
const paths = { r: '', g: '', k: '' };
days.forEach((d, i) => {
  const [hi, lo] = d.slice(1).split('-');
  paths[d[0]] += `M${bx(i)} ${hi}V${lo}`;
});
document.getElementById('candles').innerHTML =
  Object.keys(paths).map(k => `<path d="${paths[k]}" stroke="${colours[k]}"/>`).join('');

const pairs = s => s.trim().split(/\s+/).map(p => p.split(',').map(Number));
const draw = (id, pts) => document.getElementById(id).setAttribute('points', pts.map(p => p.join(',')).join(' '));

// Moving averages: day index, chart pixel.
draw('ema1', pairs(`0,1052 2,1061 5,1063 6,1066 9,1081 11,1089 12,1089 13,1083 14.3,1063 16,1023 17,1017 18,1014 19,1017 21,1024 23,1033 25,1045 26,1051 27,1060 29,1073 31,1076 33,1081 34,1081 36,1085 39,1087 40.6,1077 42,1073 43.6,1066 46,1064 48,1065 49,1061 50.6,1048 52,1030 53,1003 54,970 55,930 56,890 57,863 58,846 60,823 62,806 64,799
66,793 67,785 68,774 70,773 71,772 72,776 73,773 74,766 75.5,750 76,742 77,718 78,703 79,677 80,667 81,667 82,670 83.5,673 85,670 86,673 87,683 88,693 89.3,701 91,705 92,706 93,688 94,674 95,666 96,659 97,648 98,642 99,633 100,622 101,615 102,613 103,602 104,605 105,610 106,618 107,623 108,633 109,643 110,634 111,617 112,619 113,630 114,644 115,661 116,673 118,684 120,695 121,708 122,721 123,727 125,741 127,753 129,768 130,773 131,775
132.5,779 134,777 135,773 136,764 138,760 139,758 140,752 141,743 142,742 143,735 144,712 145,698 146,689 148,682 149,681 150,683 151,684 152,682 153,681 154,678 157,677 159,682 161,683 163,688 164.5,695 166,708 167.5,722 169,731 170,740 171,748 174,764 175,782 176,799
177,813 178.6,825 180.4,835 182,845 184,853 186,856 189,863 190,871 191.5,874 193,871 195,865 197.4,865 199,856 201,853 203,849 205,847 207,849 211,850 215.4,847 217,841 219,837 221,841 222.6,843 224,852 226,862 228,868 230,876 232,883 234,890 236,903 237.5,911 240.7,911 242,916 244,919 245.4,917 248,913 249,907 251,901 252.7,897 255,898 257.4,905 259,912 261,910 263,910`).map(([i, y]) => [bx(i), y]));

draw('ema2', pairs(`0,961 2,972 5,982 8,996 11,1008 13.5,1012 15,1007 16,1002 18,1002 20,1004 23,1011 26,1018 29,1027 33,1037 36,1043 39,1048 44,1048 48.4,1050 51,1045 52.7,1035 54,1023 56,1000 58,980 61.8,949 65.6,925 68.3,907 71,893 73,884 75,871 77,852 78,843 79.2,827 80.7,817 84.4,800
86,791 88.4,786 92,777 94,762 96,752 99,735 101,722 103,709 105,703 107,700 109.2,699 111,688 112.6,686 114,688 115.6,692 119.4,695 123,705 127,716 131.6,729 133.5,734 139.4,736 142.4,733 144.6,723 149,713 152,710 157,703 162.8,701 165,703 169,712 174,727 176,738 180,757 183.4,773 189,792 191,800
195.4,810 198,815 203.2,819 207.5,824 214.8,829 219,829 222.6,832 228,843 234,854 237.6,865 240.7,871 244,878 248,883 253,883 255,885 259,891 263,893`).map(([i, y]) => [bx(i), y]));

// Oscillator samples are kept on a 1568-wide grid with three units per vertical pixel.
const grid = ([x, y]) => [+(x / 1.452).toFixed(1), +(1120 + y / 3).toFixed(1)];
const lon = pairs(`19,628 22,628 47,610 70,612 90,608 100,590 107,550 113,515 123,506 132,518 145,545 155,570 165,595 178,630 190,648 205,656 232,660 248,650 258,635 270,618 285,610 300,605 312,580 320,545 328,490 335,430 345,350 357,305 368,292 380,284 390,300 402,314 416,298 430,318 443,340 456,322 464,280 474,245 480,208 488,222 497,265 510,310 520,345 530,390 543,425 555,445 568,430 580,438 592,425 605,388 612,380 619,358 630,390 645,440 655,465 659,462 664,425 668,450 674,510 680,570 692,680 704,740 717,785 729,840 745,882 765,910 773,916 788,905 800,870 810,825 825,790 838,730 850,680 857,610 865,568 885,550 897,563 917,545 930,548 950,568 965,575 975,590 990,630 1000,650 1015,680 1030,695 1045,718 1060,723 1087,720 1105,700 1130,688 1140,660 1152,628 1165,605 1177,575 1195,540 1210,525 1225,524 1245,512 1270,505 1280,492 1292,483 1305,492 1320,515 1335,540 1350,558 1362,580 1378,600 1390,640 1402,652 1415,635 1432,646 1448,612 1460,590 1470,550 1485,513 1497,514 1510,525 1520,540 1527,555 1540,540 1549,538`).map(grid);
const lonma = pairs(`22,626 60,620 100,612 120,580 145,540 155,533 165,535 180,560 200,605 225,645 240,656 262,655 290,635 310,615 325,585 338,545 350,490 360,430 375,360 388,318 400,302 416,298 435,308 456,320 475,310 490,280 500,268 513,262 523,268 535,300 550,355 570,405 585,430 600,432 615,412 635,396 650,399 668,412 680,445 692,500 700,540 715,620 725,680 740,760 755,820 770,870 783,895 797,902 813,890 828,860 842,810 855,740 870,670 885,610 900,570 915,555 932,552 955,553 980,565 1000,590 1025,640 1050,685 1070,708 1090,718 1110,715 1140,695 1170,645 1200,580 1225,540 1245,522 1270,513 1290,500 1310,495 1330,498 1350,515 1375,555 1400,600 1420,632 1440,643 1455,638 1475,605 1495,555 1510,532 1525,525 1548,532`).map(grid);
draw('lon', lon);
draw('lonma', lonma);

const ZERO = 1284;
const at = x => {
  const k = Math.max(1, lon.findIndex(p => p[0] >= x));
  const [a, b] = [lon[k - 1], lon[k]];
  return a[1] + (b[1] - a[1]) * (x - a[0]) / (b[0] - a[0]);
};
const bars = { up: ['', ''], down: ['', ''] };
for (let i = 0; i < 264; i++) {
  const y = at(bx(i) + .4);
  const set = y < ZERO ? bars.up : bars.down;
  set[0] += `M${bx(i) + 1} ${ZERO}V${y.toFixed(1)}`;
  set[1] += `M${bx(i)} ${ZERO}V${y.toFixed(1)}`;
}
const bar = (d, c, w) => `<path d="${d}" stroke="${c}" stroke-width="${w}"/>`;
document.getElementById('hist').innerHTML =
  bar(bars.up[0], '#f59a9a', 4) + bar(bars.down[0], '#50de50', 4) +
  bar(bars.up[1], '#c13a3a', 2) + bar(bars.down[1], '#129612', 2);
```
